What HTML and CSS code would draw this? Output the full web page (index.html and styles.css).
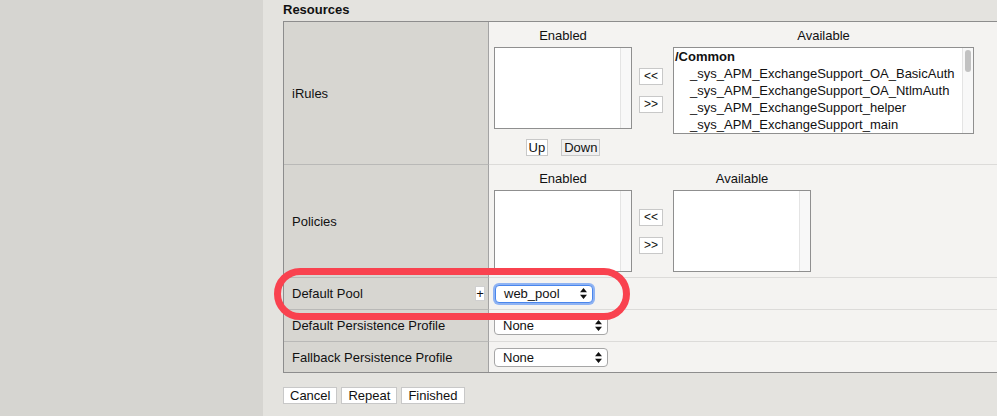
FILE: index.html
```html
<!DOCTYPE html>
<html>
<head>
<meta charset="utf-8">
<link rel="stylesheet" href="styles.css">
</head>
<body>
<div class="page">
  <aside class="sidebar"></aside>
  <main class="main">
    <h2 class="section-title">Resources</h2>
    <div class="props">
      <div class="row row-irules">
        <div class="label">iRules</div>
        <div class="value">
          <div class="dual">
            <div class="col col-enabled">
              <div class="col-head">Enabled</div>
              <div class="listbox lb-small"><div class="lb-items"></div><div class="track"></div></div>
              <div class="updown"><button class="btn">Up</button><button class="btn btn-dim">Down</button></div>
            </div>
            <div class="arrows arrows-irules"><button class="btn btn-arrow">&lt;&lt;</button><button class="btn btn-arrow">&gt;&gt;</button></div>
            <div class="col col-wide">
              <div class="col-head">Available</div>
              <div class="listbox lb-wide">
                <div class="lb-items">
                  <div class="lb-group">/Common</div>
                  <div class="lb-item">_sys_APM_ExchangeSupport_OA_BasicAuth</div>
                  <div class="lb-item">_sys_APM_ExchangeSupport_OA_NtlmAuth</div>
                  <div class="lb-item">_sys_APM_ExchangeSupport_helper</div>
                  <div class="lb-item">_sys_APM_ExchangeSupport_main</div>
                </div>
                <div class="track"><div class="thumb"></div></div>
              </div>
            </div>
          </div>
        </div>
      </div>
      <div class="row row-policies">
        <div class="label">Policies</div>
        <div class="value">
          <div class="dual">
            <div class="col col-enabled">
              <div class="col-head">Enabled</div>
              <div class="listbox lb-small"><div class="lb-items"></div><div class="track"></div></div>
            </div>
            <div class="arrows arrows-policies"><button class="btn btn-arrow">&lt;&lt;</button><button class="btn btn-arrow">&gt;&gt;</button></div>
            <div class="col col-enabled">
              <div class="col-head">Available</div>
              <div class="listbox lb-small"><div class="lb-items"></div><div class="track"></div></div>
            </div>
          </div>
        </div>
      </div>
      <div class="row row-short">
        <div class="label label-split"><span>Default Pool</span><button class="btn btn-plus">+</button></div>
        <div class="value value-center">
          <div class="select select-focus select-pool"><span>web_pool</span>
            <svg class="updown-glyph" width="7" height="11" viewBox="0 0 7 11"><path d="M3.5 0 L7 4.3 H0 Z M0 6.7 H7 L3.5 11 Z" fill="#111"/></svg>
          </div>
        </div>
      </div>
      <div class="row row-short">
        <div class="label">Default Persistence Profile</div>
        <div class="value value-center">
          <div class="select select-none"><span>None</span>
            <svg class="updown-glyph" width="7" height="11" viewBox="0 0 7 11"><path d="M3.5 0 L7 4.3 H0 Z M0 6.7 H7 L3.5 11 Z" fill="#111"/></svg>
          </div>
        </div>
      </div>
      <div class="row row-short row-last">
        <div class="label">Fallback Persistence Profile</div>
        <div class="value value-center">
          <div class="select select-none"><span>None</span>
            <svg class="updown-glyph" width="7" height="11" viewBox="0 0 7 11"><path d="M3.5 0 L7 4.3 H0 Z M0 6.7 H7 L3.5 11 Z" fill="#111"/></svg>
          </div>
        </div>
      </div>
    </div>
    <div class="actions">
      <button class="btn btn-action">Cancel</button>
      <button class="btn btn-action">Repeat</button>
      <button class="btn btn-action">Finished</button>
    </div>
    <div class="highlight"></div>
  </main>
</div>
</body>
</html>
```

FILE: styles.css
```css
html, body {
  margin: 0;
  padding: 0;
}
body {
  font-family: "Liberation Sans", Arial, Helvetica, sans-serif;
  font-size: 13px;
  color: #111;
  background: #e4e3df;
  overflow: hidden;
}
.page {
  display: flex;
  height: 416px;
}
.sidebar {
  width: 263px;
  flex: none;
  background: #d6d5d1;
}
.main {
  position: relative;
  flex: 1;
  min-width: 0;
  padding-left: 20px;
  overflow: hidden;
}
.section-title {
  margin: 0;
  height: 21px;
  box-sizing: border-box;
  padding-top: 2px;
  font-size: 13px;
  line-height: 16px;
  font-weight: bold;
  color: #111;
}
.props {
  width: 760px;
  border: 1px solid #8d8d8d;
  background: #f4f3f1;
}
.row {
  display: grid;
  grid-template-columns: 205px 1fr;
}
.row-irules { height: 143px; }
.row-policies { height: 113px; }
.row-short { height: 32px; }
.row-last { height: 30px; }

.label {
  display: flex;
  align-items: center;
  padding-left: 8px;
  background: #d7d6d1;
  border-right: 1px solid #a3a3a3;
  border-bottom: 1px solid #b9b9b7;
  color: #111;
}
.label-split {
  justify-content: space-between;
  padding-right: 3px;
}
.value {
  padding-left: 5px;
  border-bottom: 1px solid #dcdbd9;
  background: #f4f3f1;
}
.row-last .label, .row-last .value {
  border-bottom: none;
}
.value-center {
  display: flex;
  align-items: center;
}

.dual {
  display: flex;
  padding-top: 5px;
}
.col {
  display: flex;
  flex-direction: column;
}
.col-enabled { width: 138px; }
.col-wide { width: 301px; }
.col-head {
  height: 18px;
  line-height: 18px;
  margin-bottom: 2px;
  text-align: center;
}
.listbox {
  display: flex;
  box-sizing: border-box;
  border: 1px solid #8f8f8f;
  background: #fff;
}
.lb-small { height: 82px; }
.lb-wide { height: 87px; }
.lb-items {
  flex: 1;
  padding-left: 1px;
  line-height: 17px;
  white-space: nowrap;
  overflow: hidden;
}
.lb-group {
  font-weight: bold;
}
.lb-item {
  padding-left: 15px;
}
.track {
  width: 10px;
  flex: none;
  background: #f8f8f8;
  border-left: 1px solid #e4e4e4;
  position: relative;
}
.thumb {
  width: 6px;
  height: 22px;
  margin: 2px 0 0 2px;
  border-radius: 3px;
  background: #c2c2c2;
}

.arrows {
  display: flex;
  flex-direction: column;
  gap: 11px;
  margin: 0 10px 0 7px;
}
.arrows-irules { padding-top: 41px; }
.arrows-policies { padding-top: 39px; }

.btn {
  font-family: "Liberation Sans", Arial, Helvetica, sans-serif;
  font-size: 13px;
  color: #111;
  background: #fff;
  border: 1px solid #c8c8c8;
  border-radius: 0;
  margin: 0;
  padding: 0 2px;
  height: 17px;
  line-height: 15px;
}
.btn-dim {
  background: #efefef;
}
.btn-arrow {
  width: 24px;
  padding: 0;
  font-size: 12px;
}
.updown {
  display: flex;
  justify-content: center;
  gap: 13px;
  margin-top: 10px;
}
.btn-plus {
  width: 10px;
  height: 15px;
  padding: 0;
  font-size: 13px;
  line-height: 13px;
  border-color: #d0d0d0;
}

.select {
  display: flex;
  align-items: center;
  justify-content: space-between;
  box-sizing: border-box;
  background: #fff;
  border: 1px solid #a6a6a6;
  border-radius: 4px;
  padding: 0 5px 0 8px;
  height: 19px;
  line-height: 17px;
}
.select-pool {
  width: 98px;
  height: 18px;
  margin-left: 1px;
}
.select-focus {
  border-color: #4a86ec;
  box-shadow: 0 0 0 2px #8fb3f3;
}
.select-none {
  width: 114px;
}
.updown-glyph {
  flex: none;
}

.actions {
  display: flex;
  gap: 4px;
  margin-top: 14px;
}
.btn-action {
  padding: 0 6px;
}

.highlight {
  position: absolute;
  left: 11px;
  top: 268px;
  width: 356px;
  height: 52px;
  box-sizing: border-box;
  border: 7px solid #f9424f;
  border-radius: 26px;
  pointer-events: none;
}
```
